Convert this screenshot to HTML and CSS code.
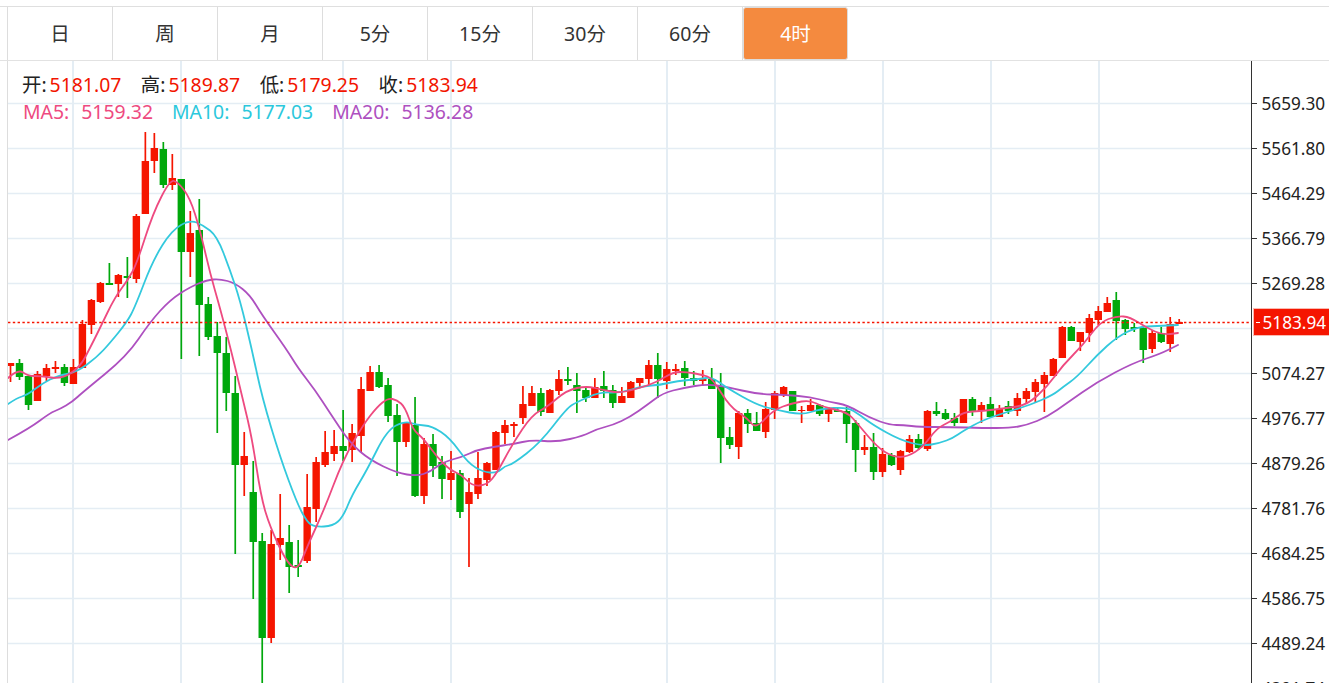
FILE: index.html
```html
<!DOCTYPE html>
<html lang="zh-CN">
<head>
<meta charset="utf-8">
<title>K线图</title>
<link rel="stylesheet" href="styles.css">
</head>
<body>
<div class="page">
  <nav class="tabs">
    <a class="tab">日</a>
    <a class="tab">周</a>
    <a class="tab">月</a>
    <a class="tab">5分</a>
    <a class="tab">15分</a>
    <a class="tab">30分</a>
    <a class="tab">60分</a>
    <a class="tab active">4时</a>
  </nav>
  <section class="chart">
    <svg id="kline" class="kline" viewBox="8 61 1321 622" width="1321" height="622" aria-label="K线图"></svg>
    <div class="legend">
      <div class="legend-row ohlc">
        <span class="item"><b>开:</b><i>5181.07</i></span>
        <span class="item"><b>高:</b><i>5189.87</i></span>
        <span class="item"><b>低:</b><i>5179.25</i></span>
        <span class="item"><b>收:</b><i>5183.94</i></span>
      </div>
      <div class="legend-row ma">
        <span class="item ma5"><b>MA5:</b><i>5159.32</i></span>
        <span class="item ma10"><b>MA10:</b><i>5177.03</i></span>
        <span class="item ma20"><b>MA20:</b><i>5136.28</i></span>
      </div>
    </div>
  </section>
</div>
<script src="app.js"></script>
</body>
</html>
```
FILE: styles.css
```css
* { box-sizing: border-box; }
html, body {
  margin: 0;
  height: 100%;
  overflow: hidden;
  background: #fff;
}
body {
  font-family: "Noto Sans", "Noto Sans CJK SC", sans-serif;
  color: #222;
}
.page {
  height: 683px;
  padding-top: 6px;
  display: flex;
  flex-direction: column;
}
.tabs {
  display: flex;
  flex: none;
  height: 55px;
  padding-left: 7px;
  border-top: 1px solid #dfdfdf;
  border-bottom: 1px solid #e2e2e2;
}
.tab {
  width: 105px;
  display: flex;
  align-items: center;
  justify-content: center;
  padding-bottom: 2px;
  font-size: 19.5px;
  color: #333;
  border-right: 1px solid #dddddd;
}
.tab:first-child {
  width: 106px;
  border-left: 1px solid #dddddd;
}
.tab.active {
  background: #f48a3f;
  color: #fff;
  border: 1px solid #dcdcdc;
  border-radius: 3px;
}
.chart {
  position: relative;
  flex: 1;
  margin-left: 7px;
  border-left: 1px solid #dddddd;
  overflow: hidden;
}
.kline {
  display: block;
}
.legend {
  position: absolute;
  left: 14px;
  top: 10px;
  font-size: 19.4px;
  line-height: 27px;
}
.legend-row {
  display: flex;
  white-space: nowrap;
}
.ohlc { gap: 19.5px; }
.ma { gap: 19px; padding-left: 1px; }
.item b { font-weight: 400; }
.item i { font-style: normal; }
.ohlc b { color: #222; margin-right: 3px; }
.ohlc i { color: #f21500; }
.ma b { margin-right: 12px; }
.ma5 { color: #ee4a80; }
.ma10 { color: #2bc8dc; }
.ma20 { color: #ae50c0; }

.grid { stroke: #e4edf4; fill: none; }
.grid-h { stroke-width: 1.5; }
.grid-v { stroke-width: 2; }
.axis { stroke: #333; stroke-width: 1; fill: none; }
.axis-label {
  font-family: "Noto Sans", sans-serif;
  font-size: 17.2px;
  fill: #222;
  dominant-baseline: central;
}
.candle-r { stroke: #f51500; fill: #f51500; }
.candle-g { stroke: #00a80c; fill: #00a80c; }
.wick { stroke-width: 1.7; }
.body { stroke: none; }
.ma-line { fill: none; stroke-width: 1.8; stroke-linejoin: round; stroke-linecap: round; }
.line-ma5 { stroke: #ee4a80; }
.line-ma10 { stroke: #33c9dd; }
.line-ma20 { stroke: #ae50c0; }
.last-line { stroke: #f51500; stroke-width: 1.6; stroke-dasharray: 2.4 2.4; }
.last-box { fill: #f51500; stroke: #fbb9b0; stroke-width: 1; }
.last-tick { stroke: #fff; stroke-width: 1; }
.last-label { fill: #fff; }
```
FILE: app.js
```js
var C = [
[363,366,363,382,'r'],[363,377,359,380,'g'],[376,405,376,410,'g'],[374,401,371,401,'r'],[368,376,364,381,'r'],
[367,369,361,373,'r'],[367,383,364,386,'g'],[367,384,359,384,'r'],[324,368,320,368,'r'],[300,325,299,334,'r'],
[283,302,282,303,'r'],[283,285,263,285,'g'],[275,284,274,297,'r'],[276,278,257,298,'g'],[216,279,214,283,'r'],
[161,214,132,214,'r'],[148,161,133,173,'r'],[149,185,142,188,'g'],[178,185,154,190,'r'],[179,252,179,359,'g'],
[233,252,211,277,'r'],[230,305,199,356,'g'],[304,337,297,340,'g'],[336,353,322,433,'g'],[353,393,337,411,'g'],
[393,465,376,554,'g'],[456,465,432,496,'r'],[492,542,461,599,'g'],[541,638,533,683,'g'],[544,638,530,643,'r'],
[538,545,494,560,'r'],[542,567,525,593,'g'],[565,567,540,577,'g'],[507,561,474,563,'r'],[462,509,457,522,'r'],
[452,465,431,467,'r'],[446,454,430,461,'r'],[446,451,410,461,'g'],[433,450,424,462,'r'],[389,436,377,452,'r'],
[372,391,366,391,'r'],[372,387,365,388,'g'],[385,416,378,422,'g'],[415,442,404,476,'g'],[423,442,422,447,'r'],
[425,496,397,497,'g'],[444,496,438,504,'r'],[444,466,434,477,'g'],[462,479,456,499,'g'],[473,480,451,500,'r'],
[473,512,470,518,'g'],[492,504,478,567,'r'],[478,494,452,499,'r'],[463,480,462,486,'r'],[432,470,431,470,'r'],
[425,433,420,444,'r'],[424,426,422,437,'r'],[404,418,386,424,'r'],[393,406,386,406,'r'],[393,412,388,416,'g'],
[390,413,389,413,'r'],[379,391,370,395,'r'],[379,381,367,385,'g'],[385,391,373,413,'g'],[390,398,387,402,'g'],
[387,398,378,398,'r'],[386,391,371,398,'g'],[390,403,385,408,'g'],[396,403,387,403,'r'],[382,398,381,398,'r'],
[378,383,378,387,'r'],[365,379,360,385,'r'],[365,379,353,398,'g'],[369,381,362,389,'r'],[369,371,364,375,'r'],
[368,378,361,386,'g'],[378,381,371,385,'g'],[379,381,370,386,'r'],[379,389,368,389,'g'],[386,438,373,463,'g'],
[437,445,427,449,'g'],[413,447,411,459,'r'],[413,424,409,433,'g'],[423,431,412,431,'g'],[409,432,402,438,'r'],
[393,410,391,419,'r'],[387,395,386,397,'r'],[391,411,391,411,'g'],[410,411,406,423,'r'],[405,411,399,411,'r'],
[405,414,404,416,'g'],[409,414,407,422,'r'],[410,412,407,412,'g'],[411,424,407,443,'g'],[423,450,420,472,'g'],
[447,450,435,455,'r'],[447,472,433,480,'g'],[454,472,448,477,'r'],[455,465,453,466,'g'],[451,470,450,475,'r'],
[439,452,435,453,'r'],[439,448,434,450,'g'],[411,449,410,451,'r'],[411,414,402,416,'g'],[413,419,409,420,'g'],
[418,423,413,426,'g'],[399,423,399,423,'r'],[399,412,397,416,'g'],[405,411,402,423,'r'],[404,417,397,417,'g'],
[409,417,405,417,'r'],[406,411,401,414,'g'],[398,411,393,416,'r'],[391,399,388,403,'r'],[382,392,379,403,'r'],
[375,384,372,412,'r'],[359,376,358,376,'r'],[327,358,326,358,'r'],[327,341,326,341,'g'],[332,342,332,351,'r'],
[318,333,314,342,'r'],[311,320,306,325,'r'],[303,312,297,312,'r'],[300,321,292,340,'g'],[320,329,319,335,'g'],
[327,329,323,332,'g'],[328,350,327,363,'g'],[333,349,330,353,'r'],[333,342,327,343,'g'],[324,344,317,352,'r'],
[322,324,319,324,'r']
];
var MA5 = "8,378 18,369 28,376 40,376 62,379 80,367 90,348 100,328 115,297 128,280 137,263 153,213 170,180 178,182 190,198 200,230 210,273 220,308 231,350 243,400 252,438 261,497 270,527 287,563 298,570 307,547 324,510 343,460 363,425 377,407 388,398 397,400 405,407 413,430 423,438 437,457 450,470 462,475 472,486 487,485 497,473 513,443 532,415 547,407 567,390 587,386 603,390 620,393 640,388 657,382 673,372 687,372 703,375 712,378 730,407 747,418 756,429 773,410 793,403 810,400 823,407 847,412 857,423 877,447 893,457 907,457 923,447 937,428 950,422 963,412 983,411 1007,408 1027,405 1047,387 1063,365 1083,345 1100,322 1117,316 1130,317 1147,328 1163,335 1178,333";
var MA10 = "8,404 17,398 27,395 43,383 57,376 77,372 97,357 110,343 127,322 135,307 153,260 172,230 190,220 203,225 217,236 230,270 240,300 252,350 262,397 280,457 297,503 307,522 315,527 333,526 343,517 352,495 367,470 387,430 405,421 417,425 432,426 450,438 468,463 483,472 497,473 505,466 513,464 540,443 567,408 577,402 600,392 620,393 643,386 660,385 677,381 700,379 712,377 727,388 757,405 777,410 802,415 820,409 847,407 860,415 873,425 900,440 923,446 940,443 953,438 963,431 983,420 1010,411 1030,405 1053,395 1063,387 1077,377 1097,355 1117,337 1137,327 1157,326 1178,325";
var MA20 = "8,440 30,428 50,413 60,409 72,402 83,392 127,356 150,322 170,300 190,287 207,280 220,279 235,283 250,295 262,315 287,350 298,368 315,390 330,413 350,443 370,460 397,473 417,476 430,472 443,462 462,457 477,450 493,447 513,444 532,440 557,442 583,436 597,429 613,425 630,417 647,405 663,393 683,388 707,384 727,387 757,394 787,395 810,397 830,402 847,405 870,418 890,425 903,425 920,427 950,427 983,428 1010,428 1027,425 1047,417 1067,403 1097,382 1133,363 1160,354 1178,345";
var H = [[103.5,"5659.30"],[148.5,"5561.80"],[193.5,"5464.29"],[238.5,"5366.79"],[283.5,"5269.28"],[328.5,""],[373.5,"5074.27"],[418.5,"4976.77"],[463.5,"4879.26"],[508.5,"4781.76"],[553.5,"4684.25"],[598.5,"4586.75"],[643.5,"4489.24"],[688.5,"4391.74"]];
var V = [73,181,343,451,667,775,883,991,1099];
function smooth(str) {
  var p = str.split(" ").map(function (q) { return q.split(",").map(Number); });
  var d = "M" + p[0][0] + " " + p[0][1];
  for (var i = 1; i < p.length - 1; i++) {
    var mx = (p[i][0] + p[i + 1][0]) / 2, my = (p[i][1] + p[i + 1][1]) / 2;
    d += " Q" + p[i][0] + " " + p[i][1] + " " + mx + " " + my;
  }
  var l = p[p.length - 1];
  return d + " L" + l[0] + " " + l[1];
}
var s = "";
V.forEach(function (x) { s += '<line class="grid grid-v" x1="'+x+'" x2="'+x+'" y1="61" y2="683"/>'; });
H.forEach(function (h) {
  s += '<line class="grid grid-h" x1="8" x2="1252" y1="'+h[0]+'" y2="'+h[0]+'"/>';
  if (h[1]) {
    s += '<line class="axis" x1="1252" x2="1257" y1="'+h[0]+'" y2="'+h[0]+'"/>';
    s += '<text class="axis-label" x="1261.5" y="'+h[0]+'">'+h[1]+'</text>';
  }
});
s += '<line class="axis" x1="1251.5" x2="1251.5" y1="61" y2="683"/>';
C.forEach(function (c, i) {
  var x = 10.5 + i * 8.99;
  s += '<g class="candle-'+c[4]+'"><line class="wick" x1="'+x+'" x2="'+x+'" y1="'+c[2]+'" y2="'+c[3]+'"/>';
  s += '<rect class="body" x="'+(x-3.7)+'" y="'+c[0]+'" width="7.4" height="'+(c[1]-c[0])+'"/></g>';
});
s += '<path class="ma-line line-ma20" d="'+smooth(MA20)+'"/>';
s += '<path class="ma-line line-ma10" d="'+smooth(MA10)+'"/>';
s += '<path class="ma-line line-ma5" d="'+smooth(MA5)+'"/>';
s += '<line class="last-line" x1="8" x2="1251" y1="322.5" y2="322.5"/>';
s += '<rect class="last-box" x="1253.5" y="308.5" width="80" height="27"/>';
s += '<line class="last-tick" x1="1256" x2="1260" y1="322.5" y2="322.5"/>';
s += '<text class="axis-label last-label" x="1262.5" y="322">5183.94</text>';
document.getElementById("kline").innerHTML = s;
```
